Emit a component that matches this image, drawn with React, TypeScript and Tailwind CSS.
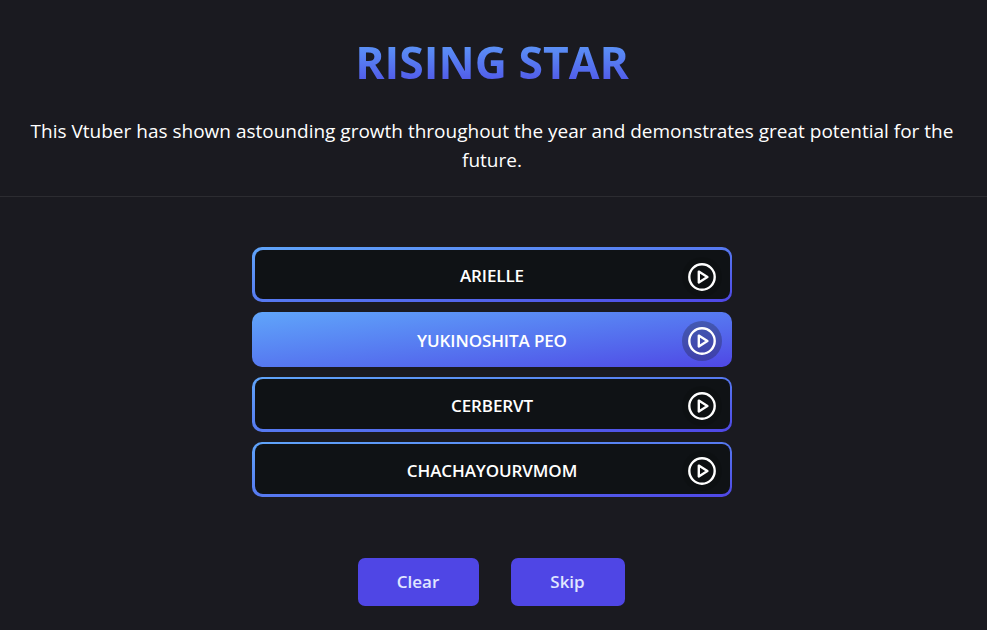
const names = ["ARIELLE", "YUKINOSHITA PEO", "CERBERVT", "CHACHAYOURVMOM"];

function PlayIcon() {
  return (
    <svg width="30" height="30" viewBox="0 0 30 30" fill="none" stroke="#fff" strokeWidth="2.4" strokeLinejoin="round" strokeLinecap="round">
      <circle cx="15" cy="15" r="12.7" />
      <path d="M11.8 9.6 L20.4 15 L11.8 20.4 Z" />
    </svg>
  );
}

function Row({ name, active }: { name: string; active: boolean }) {
  return (
    <div className="rounded-[10px] h-[54.6px] p-[2.5px] bg-gradient-to-br from-[#60a5fa] to-[#4f46e5]">
      <div className={active ? "relative h-full rounded-[8px] flex items-center justify-center" : "relative h-full rounded-[8px] flex items-center justify-center bg-[#0f1215]"}>
        <span className="text-white text-[17px] font-semibold leading-6 pt-[3px] tracking-[-0.1px]">{name}</span>
        <div className={active ? "absolute right-[7.5px] top-[7px] w-10 h-10 rounded-full flex items-center justify-center bg-[#1a1a20]/30" : "absolute right-[7.5px] top-[7px] w-10 h-10 rounded-full flex items-center justify-center bg-black/10"}>
          <PlayIcon />
        </div>
      </div>
    </div>
  );
}

export default function App() {
  return (
    <div className="w-full h-[630px] overflow-hidden bg-[#1a1a20] text-white font-['Open_Sans','Noto_Sans',sans-serif]">
      <header className="h-[197px] border-b border-[#2c2c31] pl-6 pr-[27px] pt-[32px] text-center">
        <h1 className="text-[44.5px] leading-[60px] font-bold bg-gradient-to-b from-[#60a5fa] to-[#4f46e5] bg-clip-text text-transparent">RISING STAR</h1>
        <p className="mt-[25px] text-[19px] leading-[29px]">This Vtuber has shown astounding growth throughout the year and demonstrates great potential for the future.</p>
      </header>
      <div className="pr-[3px]">
        <main className="w-[480px] mx-auto mt-[50px] flex flex-col gap-[10.4px]">
          {names.map((n, i) => <Row key={n} name={n} active={i === 1} />)}
        </main>
        <div className="mt-[61px] flex justify-center gap-8 pr-[2px] text-[#e0e7ff] text-[17px] font-semibold">
          <button className="w-[121px] h-[48px] rounded-[7px] bg-[#4f46e5]">Clear</button>
          <button className="w-[114px] h-[48px] rounded-[7px] bg-[#4f46e5]">Skip</button>
        </div>
      </div>
    </div>
  );
}
